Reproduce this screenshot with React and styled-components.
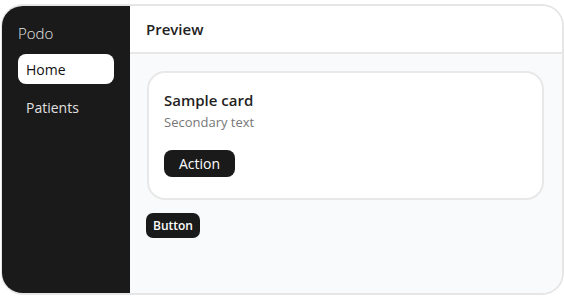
import React from "react";
import styled, { createGlobalStyle } from "styled-components";

const Global = createGlobalStyle`
  html, body {
    margin: 0;
    padding: 0;
    background: #ffffff;
  }
  body {
    font-family: "Open Sans", "Noto Sans", "Liberation Sans", sans-serif;
  }
`;

const Frame = styled.div`
  box-sizing: border-box;
  margin: 4px 0 0 1px;
  width: 563px;
  height: 291px;
  border: 2px solid #e6e6e6;
  border-left-width: 1px;
  border-radius: 22px;
  overflow: hidden;
  display: flex;
`;

const Sidebar = styled.aside`
  width: 128px;
  flex-shrink: 0;
  background: #1a1a1a;
  padding: 16px 16px;
  box-sizing: border-box;
  display: flex;
  flex-direction: column;
`;

const Brand = styled.div`
  color: #e6e6e6;
  font-size: 15px;
  font-weight: 300;
  line-height: 22px;
  margin-bottom: 10px;
`;

const NavList = styled.nav`
  display: flex;
  flex-direction: column;
  gap: 8px;
`;

const NavItem = styled.div`
  height: 30px;
  display: flex;
  align-items: center;
  padding: 0 8px;
  border-radius: 8px;
  font-size: 14px;
  background: ${(p) => (p.$active ? "#ffffff" : "transparent")};
  color: ${(p) => (p.$active ? "#111111" : "#e0e0e0")};
`;

const Main = styled.main`
  flex: 1;
  display: flex;
  flex-direction: column;
  background: #f8fafc;
`;

const Header = styled.header`
  height: 46px;
  flex-shrink: 0;
  background: #ffffff;
  border-bottom: 2px solid #e8e8e8;
  display: flex;
  align-items: center;
  padding: 0 16px;
  font-size: 15px;
  font-weight: 600;
  color: #222222;
`;

const Content = styled.section`
  padding: 17px 18px 0 16px;
  display: flex;
  flex-direction: column;
  align-items: flex-start;
  gap: 13px;
`;

const Card = styled.div`
  box-sizing: border-box;
  align-self: stretch;
  margin-left: 1px;
  background: #ffffff;
  border: 2px solid #e8e8e8;
  border-radius: 18px;
  padding: 16px 15px 21px;
  display: flex;
  flex-direction: column;
  align-items: flex-start;
`;

const CardTitle = styled.div`
  font-size: 15px;
  font-weight: 600;
  color: #1f1f1f;
  line-height: 22px;
`;

const CardText = styled.div`
  font-size: 13px;
  color: #777777;
  line-height: 18px;
  margin-top: 2px;
`;

const DarkButton = styled.button`
  border: none;
  background: #1a1a1a;
  color: #ffffff;
  font-family: inherit;
  cursor: pointer;
  padding: 0 ${(p) => (p.$small ? "7px" : "15px")};
  height: ${(p) => (p.$small ? "25px" : "27px")};
  border-radius: ${(p) => (p.$small ? "7px" : "8px")};
  font-size: ${(p) => (p.$small ? "12px" : "14px")};
  font-weight: ${(p) => (p.$small ? 600 : 500)};
  margin-top: ${(p) => (p.$small ? "0" : "19px")};
`;

export default function App() {
  return (
    <>
      <Global />
      <Frame>
        <Sidebar>
          <Brand>Podo</Brand>
          <NavList>
            <NavItem $active>Home</NavItem>
            <NavItem>Patients</NavItem>
          </NavList>
        </Sidebar>
        <Main>
          <Header>Preview</Header>
          <Content>
            <Card>
              <CardTitle>Sample card</CardTitle>
              <CardText>Secondary text</CardText>
              <DarkButton>Action</DarkButton>
            </Card>
            <DarkButton $small>Button</DarkButton>
          </Content>
        </Main>
      </Frame>
    </>
  );
}
